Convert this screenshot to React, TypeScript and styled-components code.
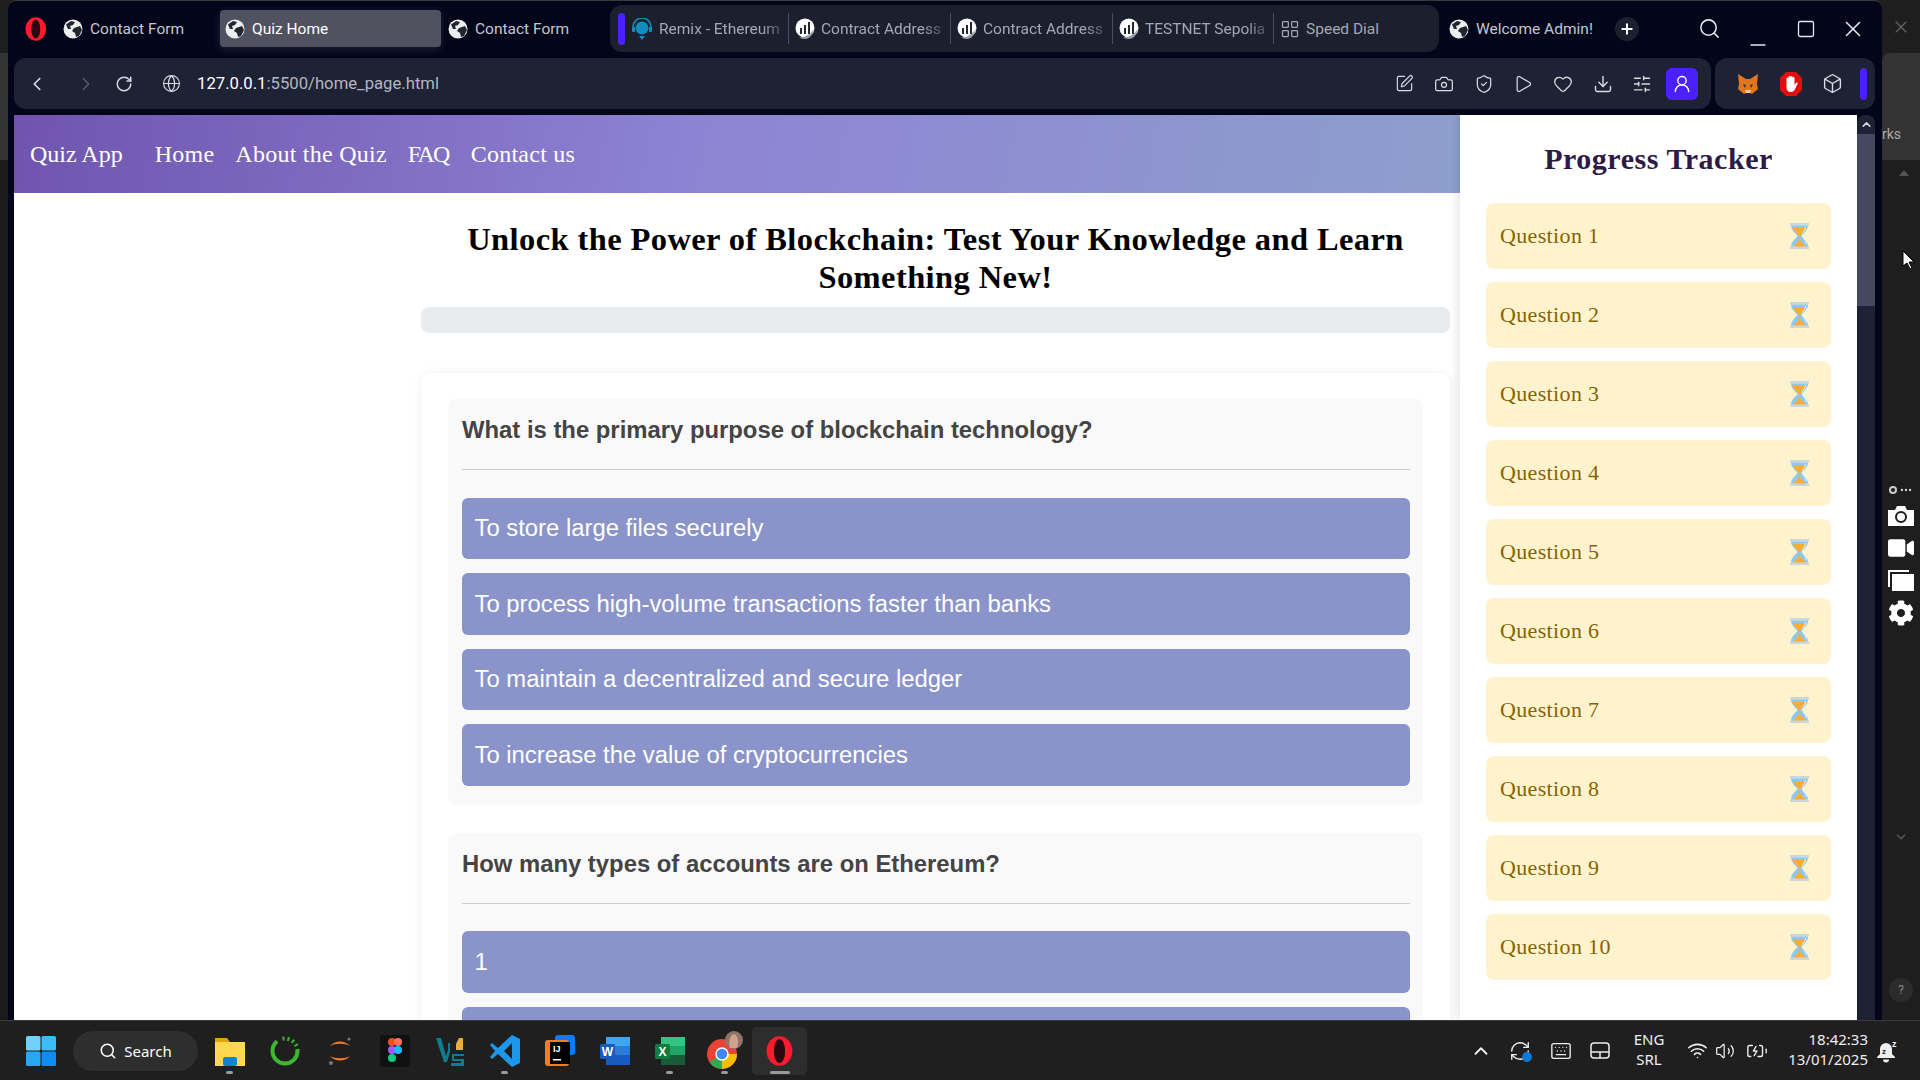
import React from 'react';
import styled, { createGlobalStyle } from 'styled-components';
import {
  ChevronLeft, ChevronRight, RotateCw, Globe, SquarePen, Camera, ShieldCheck, Play, Heart, Download,
  SlidersHorizontal, UserRound, Box, Search, Minus, Square, X, Plus, LayoutGrid, ChevronUp,
  Keyboard, Wifi, Volume2, BatteryCharging, RefreshCw, ChevronDown, MoreHorizontal,
} from 'lucide-react';
import { FaVideo, FaCog } from 'react-icons/fa';

const GlobalStyle = createGlobalStyle`
  html, body { margin: 0; padding: 0; height: 100%; overflow: hidden; background: #1f1f1f; }
  * { box-sizing: border-box; }
`;

const Screen = styled.div`
  width: 1920px;
  height: 1080px;
  display: flex;
  flex-direction: column;
  font-family: Roboto, "Liberation Sans", sans-serif;
`;
const Desktop = styled.div`
  flex: 1;
  min-height: 0;
  display: flex;
  background: #1e1e1e;
`;
const LeftEdge = styled.div`
  width: 8px;
  background: linear-gradient(#1e1e1e 53px, #333 53px, #333 160px, #1b1b1b 160px);
`;
const BrowserWindow = styled.div`
  width: 1874px;
  display: flex;
  flex-direction: column;
  background: #03061a;
  border-top: 1px solid #3a3a3a;
  border-radius: 8px 8px 0 0;
  overflow: hidden;
`;
const TabRow = styled.div`
  height: 57px;
  display: flex;
  align-items: center;
  padding: 0 0 2px 13px;
`;
const LogoSlot = styled.div`
  width: 30px;
  display: flex;
  justify-content: center;
`;
const Tab = styled.div<{ $w: number; $active?: boolean; $ml?: number }>`
  width: ${(p) => p.$w}px;
  height: 37px;
  margin-left: ${(p) => p.$ml || 0}px;
  display: flex;
  align-items: center;
  gap: 7px;
  padding-left: ${(p) => (p.$active ? '5px' : '7px')};
  border-radius: 4px;
  font-size: 15.5px;
  white-space: nowrap;
  color: ${(p) => (p.$active ? '#fff' : '#c3c6ce')};
  background: ${(p) => (p.$active ? '#50525f' : 'transparent')};
  box-shadow: ${(p) => (p.$active ? '0 2px 8px rgba(120,125,150,.25)' : 'none')};
`;
const Island = styled.div`
  width: 829px;
  height: 47px;
  margin-left: 34px;
  padding-left: 8px;
  display: flex;
  align-items: center;
  background: #1c1f2e;
  border-radius: 12px;
`;
const PurpleBar = styled.div<{ $ml?: number }>`
  width: 7px;
  height: 32px;
  flex: none;
  margin-left: ${(p) => p.$ml || 0}px;
  background: #4c1fff;
  border-radius: 4px;
`;
const IslandTab = styled.div<{ $w: number; $divider?: boolean }>`
  width: ${(p) => p.$w}px;
  height: 31px;
  flex: none;
  display: flex;
  align-items: center;
  gap: 6px;
  padding-left: 6px;
  white-space: nowrap;
  font-size: 15.5px;
  color: #a5a8b4;
  border-left: ${(p) => (p.$divider ? '1px solid #4a4d5c' : 'none')};
`;
const FadedLabel = styled.span`
  -webkit-mask-image: linear-gradient(90deg, #000 85%, rgba(0, 0, 0, 0.35));
  mask-image: linear-gradient(90deg, #000 85%, rgba(0, 0, 0, 0.35));
`;
const PlusButton = styled.div`
  width: 24px;
  height: 24px;
  display: flex;
  align-items: center;
  justify-content: center;
  border-radius: 50%;
  background: #1c1f2e;
  color: #fff;
`;
const WindowButton = styled.div<{ $ml: number; $low?: boolean }>`
  width: 26px;
  display: flex;
  justify-content: center;
  margin-left: ${(p) => p.$ml}px;
  padding-top: ${(p) => (p.$low ? '16px' : '0')};
  margin-bottom: ${(p) => (p.$low ? '-16px' : '0')};
  color: #e6e7ea;
`;
const ToolRow = styled.div`
  height: 51px;
  display: flex;
  gap: 4px;
  padding: 0 6px;
`;
const AddressBar = styled.div`
  width: 1697px;
  display: flex;
  align-items: center;
  background: #1e2235;
  border-radius: 12px;
`;
const NavIcon = styled.div<{ $w: number; $dim?: boolean }>`
  width: ${(p) => p.$w}px;
  flex: none;
  display: flex;
  justify-content: center;
  color: ${(p) => (p.$dim ? '#565a6c' : '#d9dbe1')};
`;
const UrlText = styled.div`
  flex: 1;
  margin-left: -9px;
  font-size: 16.7px;
  color: #fff;
  span { color: #b4b6c0; }
`;
const ProfileButton = styled.div`
  width: 32px;
  height: 32px;
  margin: 0 13px 0 4px;
  border-radius: 6px;
  display: flex;
  align-items: center;
  justify-content: center;
  color: #fff;
  background: #4c1fff;
`;
const ExtensionPanel = styled.div`
  width: 160px;
  display: flex;
  align-items: center;
  padding-left: 21px;
  gap: 19px;
  background: #1e2235;
  border-radius: 12px;
`;
const PageRow = styled.div`
  flex: 1;
  min-height: 0;
  margin-top: 6px;
  display: flex;
  padding: 0 6px;
`;
const MainArea = styled.div`
  width: 1446px;
  background: #fff;
  overflow: hidden;
`;
const TopNav = styled.nav`
  height: 78px;
  display: flex;
  align-items: center;
  padding-left: 16px;
  background: linear-gradient(100deg, #6f54ae 0%, #8e84d4 48%, #8d9fcc 100%);
  font-family: "Liberation Serif", serif;
  font-size: 24px;
  color: #fff;
`;
const Brand = styled.div`
  margin-right: 32px;
`;
const NavLink = styled.div<{ $tight?: boolean }>`
  margin-right: ${(p) => (p.$tight ? '22px' : '21px')};
  letter-spacing: ${(p) => (p.$tight ? '-1.8px' : '0.25px')};
`;
const Content = styled.main`
  padding: 27px 10px 0 407px;
`;
const PageTitle = styled.h1`
  margin: 0 0 11px;
  text-align: center;
  font: bold 32.5px/38px "Liberation Serif", serif;
  letter-spacing: 0.4px;
  color: #000;
`;
const ProgressTrack = styled.div`
  height: 26px;
  margin-bottom: 40px;
  background: #e9ecef;
  border-radius: 8px;
`;
const QuizCard = styled.section`
  padding: 26px 27px;
  background: #fff;
  border-radius: 10px;
  box-shadow: 0 0 10px rgba(0, 0, 0, 0.07);
`;
const QuestionBlock = styled.div`
  padding: 15px 13px 19px 14px;
  margin-bottom: 28px;
  background: #f9f9f9;
  border-radius: 8px;
`;
const QuestionTitle = styled.h3`
  margin: 0 0 27.5px;
  padding-bottom: 23px;
  height: 32px;
  box-sizing: content-box;
  border-bottom: 1px solid #ccc;
  font: bold 23.85px/32px "Liberation Sans", Arial, sans-serif;
  color: #444;
`;
const OptionList = styled.div`
  display: flex;
  flex-direction: column;
  gap: 14px;
`;
const OptionRow = styled.div`
  height: 61.5px;
  display: flex;
  align-items: center;
  padding-left: 12.5px;
  background: #8a94ca;
  border-radius: 6px;
  font: 23.85px "Liberation Sans", Arial, sans-serif;
  color: #fff;
`;
const Sidebar = styled.aside`
  width: 397px;
  padding: 0 26px;
  background: #fff;
  overflow: hidden;
  box-shadow: -3px 0 8px rgba(0, 0, 0, 0.1);
  position: relative;
`;
const SidebarTitle = styled.h2`
  margin: 26px 0 26px;
  text-align: center;
  font: bold 30px/36px "Liberation Serif", serif;
  letter-spacing: 0.53px;
  color: #2e1a47;
`;
const TrackerList = styled.div`
  display: flex;
  flex-direction: column;
  gap: 13px;
`;
const TrackerItem = styled.div`
  height: 66px;
  display: flex;
  align-items: center;
  justify-content: space-between;
  padding: 0 22px 0 14px;
  background: #fff3cd;
  border-radius: 8px;
  font: 22px "Liberation Serif", serif;
  letter-spacing: 0.35px;
  color: #856404;
`;
const ScrollTrack = styled.div`
  width: 18px;
  display: flex;
  flex-direction: column;
  align-items: center;
  background: #1e2235;
  border-radius: 8px 8px 0 0;
  color: #d5d7de;
`;
const ScrollArrow = styled.div`
  height: 19px;
  display: flex;
  align-items: center;
`;
const ScrollThumb = styled.div`
  width: 100%;
  height: 172px;
  background: #454860;
`;
const RightEdge = styled.div`
  flex: 1;
  position: relative;
  display: flex;
  flex-direction: column;
  align-items: center;
  color: #fff;
  background: #1e1e1e;
`;
const EdgeClose = styled.div`
  height: 53px;
  display: flex;
  align-items: center;
  color: #666;
`;
const EdgeTabs = styled.div`
  width: 100%;
  height: 107px;
  padding-top: 73px;
  font-size: 14px;
  color: #aaa;
  background: #333;
  border-radius: 8px 0 0 0;
`;
const EdgeTriangle = styled.div`
  margin: 10px 0 0 6px;
  width: 0;
  height: 0;
  border-left: 5px solid transparent;
  border-right: 5px solid transparent;
  border-bottom: 6px solid #555;
`;
const EdgeTools = styled.div`
  margin-top: 307px;
  display: flex;
  flex-direction: column;
  align-items: center;
  gap: 9px;
`;
const EdgeLinkRow = styled.div`
  display: flex;
  align-items: center;
  gap: 2px;
  height: 14px;
  color: #ddd;
`;
const EdgeLinkDot = styled.span`
  width: 8px;
  height: 8px;
  border: 2px solid #ccc;
  border-radius: 50%;
`;
const EdgeDownArrow = styled.div`
  margin-top: 203px;
  color: #555;
`;
const EdgeHelp = styled.div`
  margin-top: 130px;
  width: 24px;
  height: 24px;
  border-radius: 50%;
  background: #2c2c2c;
  color: #888;
  font-size: 12px;
  display: flex;
  align-items: center;
  justify-content: center;
`;
const Cursor = styled.svg`
  position: absolute;
  left: 20px;
  top: 250px;
`;
const Taskbar = styled.footer`
  height: 60px;
  display: flex;
  align-items: center;
  background: #1f1f1f;
  border-top: 1px solid #3c3c3c;
  color: #fff;
`;
const StartSlot = styled.div`
  width: 73px;
  padding-left: 26px;
  display: flex;
`;
const SearchPill = styled.div`
  width: 125px;
  height: 40px;
  margin-right: 4px;
  display: flex;
  align-items: center;
  justify-content: center;
  gap: 7px;
  background: #2e2e2e;
  border-radius: 20px;
  font: 15px "Noto Sans", sans-serif;
`;
const AppSlot = styled.div<{ $active?: boolean; $dot?: number }>`
  width: 55px;
  height: 48px;
  flex: none;
  position: relative;
  display: flex;
  align-items: center;
  justify-content: center;
  border-radius: 5px;
  background: ${(p) => (p.$active ? '#2d2d2d' : 'transparent')};
  &::after {
    content: '';
    display: ${(p) => (p.$dot ? 'block' : 'none')};
    position: absolute;
    bottom: 1px;
    left: 50%;
    width: ${(p) => p.$dot}px;
    height: 3px;
    margin-left: ${(p) => -(p.$dot || 0) / 2}px;
    border-radius: 2px;
    background: #9a9a9a;
  }
`;
const Tray = styled.div`
  margin-left: auto;
  padding-right: 12px;
  display: flex;
  align-items: center;
  color: #eee;
`;
const TrayIcon = styled.div<{ $w: number }>`
  width: ${(p) => p.$w}px;
  display: flex;
  justify-content: center;
  position: relative;
`;
const BlueDot = styled.span`
  position: absolute;
  right: 9px;
  bottom: 0;
  width: 10px;
  height: 10px;
  border-radius: 50%;
  background: #0b78d8;
`;
const TrayText = styled.div<{ $w: number; $align: string }>`
  width: ${(p) => p.$w}px;
  padding-bottom: 3px;
  text-align: ${(p) => p.$align};
  font: 15px/20.5px "Noto Sans", sans-serif;
`;

const Favicon = () => (
  <svg width="20" height="20" viewBox="0 0 20 20">
    <circle cx="10" cy="10" r="9.5" fill="#eceef0" />
    <path d="M3 5.5 8 2l4 1-2 3-3 1 1 3-3 0zM11 9l6-2 2 4-3 6-3 1-1-4-3-2z" fill="#23262f" />
  </svg>
);
const OperaLogo = ({ size = 24 }: { size?: number }) => (
  <svg width={size * 0.9} height={size} viewBox="0 0 22 24">
    <ellipse cx="11" cy="12" rx="10.5" ry="12" fill="#ff1b2d" />
    <ellipse cx="11" cy="12" rx="4.6" ry="9.8" fill="#2a0a10" />
  </svg>
);
const ScanIcon = () => (
  <svg width="20" height="22" viewBox="0 0 20 22">
    <circle cx="10" cy="10" r="9.5" fill="#fff" />
    <path d="M5 10h2v6H5zM9 7h2v9H9zM13 4h2v12h-2z" fill="#23262f" />
    <path d="M4 19c5 1 11-2 15-8-1 6-5 10-9 10-3 0-5-1-6-2z" fill="#9a9ca3" />
  </svg>
);
const RemixIcon = () => (
  <svg width="22" height="22" viewBox="0 0 22 22">
    <circle cx="11" cy="10" r="6.5" fill="#0d8fc0" />
    <path d="M2 11V9a9 9 0 0 1 18 0v2" fill="none" stroke="#0d8fc0" strokeWidth="1.6" />
    <rect x="1" y="9" width="3" height="5" rx="1" fill="#0d8fc0" />
    <rect x="18" y="9" width="3" height="5" rx="1" fill="#0d8fc0" />
    <path d="M8 18h6l-3 4z" fill="#0d8fc0" />
  </svg>
);
const FoxIcon = () => (
  <svg width="24" height="24" viewBox="0 0 24 24">
    <path d="M2 2l8 5h4l8-5-1 10 1 5-6 5-2-1h-4l-2 1-6-5 1-5z" fill="#e2761b" />
    <path d="M7 12l3 1-1 3zM17 12l-3 1 1 3z" fill="#233447" />
    <path d="M9 18h6l-1 3h-4z" fill="#f6c9a0" />
  </svg>
);
const StopIcon = () => (
  <svg width="24" height="26" viewBox="0 0 24 26">
    <path d="M7 1h10l6 6v12l-6 6H7l-6-6V7z" fill="#e30e0e" />
    <path d="M7.5 12V7.5a1 1 0 0 1 2 0V6a1 1 0 0 1 2 0v0a1 1 0 0 1 2 0v1a1 1 0 0 1 2 0v7l1.5-2c1-1 2 0 1.5 1l-3 6c-1 1.5-2 2-3.5 2-3 0-4.5-2-4.5-4z" fill="#fff" />
  </svg>
);
const Hourglass = () => (
  <svg width="19" height="26" viewBox="0 0 19 26">
    <rect x="0" y="0" width="19" height="2.5" fill="#ccd6dd" />
    <rect x="0" y="23.5" width="19" height="2.5" fill="#ccd6dd" />
    <path d="M1 2.5h17c0 5-5 8-6.5 10.500 1.5 2.5 6.5 5.5 6.5 10.500H1c0-5 5-8 6.5-10.500C6 10.500 1 7.5 1 2.500z" fill="#88c9f9" />
    <path d="M2.5 5h14c-1 3-5 5.5-6 8h-2c-1-2.5-5-5-6-8zM9 13h1l.5 5 5.5 5.500H3L8.500 18z" fill="#ffac33" />
    <path d="M15.5 4c0 3-2 5-3.500 6.500M13 15c1.500 1.500 3 3.500 3 6" stroke="#e6f4ff" strokeWidth="1" fill="none" />
  </svg>
);
const SolidCamera = () => (
  <svg width="26" height="20" viewBox="0 0 26 20">
    <path d="M0 4h7l2-4h8l2 4h7v16H0z" fill="#fff" />
    <circle cx="13" cy="11" r="5" fill="#fff" stroke="#1e1e1e" strokeWidth="2" />
  </svg>
);
const StackedWindows = () => (
  <svg width="26" height="21" viewBox="0 0 26 21">
    <path d="M0 0h21v2H2v15H0z" fill="#fff" />
    <rect x="4" y="4" width="22" height="17" fill="#fff" />
  </svg>
);
const WindowsLogo = () => (
  <svg width="30" height="30" viewBox="0 0 30 30">
    <rect x="0" y="0" width="14.5" height="14.5" rx="1.5" fill="#6fd2fb" />
    <rect x="15.5" y="0" width="14.5" height="14.5" rx="1.5" fill="#3cbcf8" />
    <rect x="0" y="15.5" width="14.5" height="14.5" rx="1.5" fill="#26a8f5" />
    <rect x="15.5" y="15.5" width="14.5" height="14.5" rx="1.5" fill="#0f8cf0" />
  </svg>
);
const ExplorerIcon = () => (
  <svg width="30" height="30" viewBox="0 0 30 30">
    <path d="M0 2h12l3 4h15v24H0z" fill="#e0a50e" />
    <rect y="6" width="30" height="24" fill="#ffd84f" />
    <rect x="8" y="21" width="14" height="9" rx="2" fill="#1482cf" />
  </svg>
);
const RingIcon = () => (
  <svg width="30" height="30" viewBox="0 0 30 30">
    <circle cx="15" cy="15" r="12.5" fill="none" stroke="#3eb82f" strokeWidth="4" strokeDasharray="50 6 2 3 2 3 2 3 2 3" />
  </svg>
);
const JupyterIcon = () => (
  <svg width="26" height="30" viewBox="0 0 26 30">
    <path d="M3 10c5-6 15-6 20 0-5-3-15-3-20 0zM3 20c5 6 15 6 20 0-5 3-15 3-20 0z" fill="#f37726" />
    <circle cx="4" cy="27" r="2" fill="#777" />
    <circle cx="22" cy="3" r="1.5" fill="#777" />
  </svg>
);
const FigmaIcon = () => (
  <svg width="30" height="32" viewBox="0 0 30 32">
    <rect width="30" height="32" rx="3" fill="#111" />
    <circle cx="12" cy="7" r="4" fill="#f24e1e" />
    <circle cx="18" cy="7" r="4" fill="#ff7262" />
    <circle cx="12" cy="15" r="4" fill="#a259ff" />
    <circle cx="18" cy="15" r="4" fill="#1abcfe" />
    <circle cx="12" cy="23" r="4" fill="#0acf83" />
  </svg>
);
const VsIcon = () => (
  <svg width="30" height="30" viewBox="0 0 30 30">
    <path d="M1 2h5l5 18 2-6v-7h2v9l-3 10H9z" fill="#0f7c8e" />
    <path d="M21 8l3-6h4v12h-7z" fill="#f0a93a" />
    <path d="M17 18h12v2H19v3h10v7H16v-3h10v-2H17z" fill="#0f7c8e" />
  </svg>
);
const VsCodeIcon = () => (
  <svg width="30" height="32" viewBox="0 0 30 32">
    <path d="M22 0l8 4v24l-8 4L8 19l-6 5-2-2 5-6-5-6 2-2 6 5z" fill="#1c97ea" />
    <path d="M22 8l-8 8 8 8z" fill="#1f1f1f" />
  </svg>
);
const IntellijIcon = () => (
  <svg width="30" height="32" viewBox="0 0 30 32">
    <rect x="10" y="0" width="20" height="20" rx="3" fill="#087cfa" />
    <rect x="0" y="5" width="24" height="26" rx="3" fill="#fe7a17" />
    <rect x="5" y="7" width="20" height="22" fill="#000" />
    <text x="8" y="17" fontSize="9" fontWeight="700" fill="#fff" fontFamily="Liberation Sans">IJ</text>
    <rect x="8" y="24" width="8" height="1.5" fill="#fff" />
  </svg>
);
const OfficeIcon = ({ letter, dark, mid, light, tile }: { letter: string; dark: string; mid: string; light: string; tile: string }) => (
  <svg width="30" height="28" viewBox="0 0 30 28">
    <rect x="6" y="0" width="24" height="9.5" fill={light} />
    <rect x="6" y="9" width="24" height="9.5" fill={mid} />
    <rect x="6" y="18" width="24" height="10" fill={dark} />
    <rect x="0" y="7" width="15" height="15" rx="1.5" fill={tile} />
    <text x="7.5" y="19" textAnchor="middle" fontSize="12" fontWeight="700" fill="#fff" fontFamily="Liberation Sans">{letter}</text>
  </svg>
);
const ChromeIcon = () => (
  <svg width="36" height="40" viewBox="0 0 36 40">
    <circle cx="15" cy="23" r="15" fill="#ea4335" />
    <path d="M15 23 2.5 31A15 15 0 0 0 15 38z" fill="#34a853" />
    <path d="M15 23h15a15 15 0 0 1-15 15z" fill="#fbbc05" />
    <circle cx="15" cy="23" r="6" fill="#4285f4" stroke="#fff" strokeWidth="1.5" />
    <circle cx="27" cy="9" r="9" fill="#8d7468" />
    <path d="M23 17c-2-6 0-13 4-14 4 1 5 8 3 14z" fill="#cfa48d" />
  </svg>
);
const SnoozeBell = () => (
  <svg width="22" height="24" viewBox="0 0 22 24">
    <path d="M9 4a6 6 0 0 0-6 6v5l-3 3v1h18v-1l-3-3v-5a6 6 0 0 0-6-6z" fill="#eee" />
    <path d="M6 20.5a3 3 0 0 0 6 0z" fill="#eee" />
    <text x="5" y="15" fontSize="8" fontWeight="700" fill="#222" fontFamily="Liberation Sans">z</text>
    <text x="15" y="8" fontSize="9" fontWeight="700" fill="#eee" fontFamily="Liberation Sans">z</text>
  </svg>
);
const TouchpadIcon = () => (
  <svg width="20" height="18" viewBox="0 0 20 18">
    <rect x="1" y="1" width="18" height="15" rx="3" fill="none" stroke="#eee" strokeWidth="1.5" />
    <path d="M1 10h18M10 10v6" stroke="#eee" strokeWidth="1.5" />
  </svg>
);

const questions = Array.from({ length: 10 }, (_, i) => `Question ${i + 1}`);
const firstOptions = [
  'To store large files securely',
  'To process high-volume transactions faster than banks',
  'To maintain a decentralized and secure ledger',
  'To increase the value of cryptocurrencies',
];

export default function App() {
  return (
    <Screen>
      <GlobalStyle />
      <Desktop>
        <LeftEdge />
        <BrowserWindow>
          <TabRow>
            <LogoSlot><OperaLogo size={24} /></LogoSlot>
            <Tab $w={161} $ml={5}><Favicon />Contact Form</Tab>
            <Tab $w={221} $ml={3} $active><Favicon />Quiz Home</Tab>
            <Tab $w={135}><Favicon />Contact Form</Tab>
            <Island>
              <PurpleBar />
              <IslandTab $w={163}><RemixIcon /><FadedLabel>Remix - Ethereum</FadedLabel></IslandTab>
              <IslandTab $w={162} $divider><ScanIcon /><FadedLabel>Contract Address</FadedLabel></IslandTab>
              <IslandTab $w={162} $divider><ScanIcon /><FadedLabel>Contract Address</FadedLabel></IslandTab>
              <IslandTab $w={161} $divider><ScanIcon /><FadedLabel>TESTNET Sepolia</FadedLabel></IslandTab>
              <IslandTab $w={150} $divider><LayoutGrid size={20} strokeWidth={1.5} />Speed Dial</IslandTab>
            </Island>
            <Tab $w={173} $ml={3}><Favicon />Welcome Admin!</Tab>
            <PlusButton><Plus size={16} strokeWidth={3} /></PlusButton>
            <WindowButton $ml={57}><Search size={23} strokeWidth={1.6} /></WindowButton>
            <WindowButton $ml={23} $low><Minus size={24} strokeWidth={1.4} /></WindowButton>
            <WindowButton $ml={22}><Square size={20} strokeWidth={1.6} /></WindowButton>
            <WindowButton $ml={21}><X size={26} strokeWidth={1.5} /></WindowButton>
          </TabRow>
          <ToolRow>
            <AddressBar>
              <NavIcon $w={46}><ChevronLeft size={22} strokeWidth={1.8} /></NavIcon>
              <NavIcon $w={52} $dim><ChevronRight size={22} strokeWidth={1.8} /></NavIcon>
              <NavIcon $w={24}><RotateCw size={18} strokeWidth={2} /></NavIcon>
              <NavIcon $w={70}><Globe size={19} strokeWidth={1.4} /></NavIcon>
              <UrlText>127.0.0.1<span>:5500/home_page.html</span></UrlText>
              <NavIcon $w={40}><SquarePen size={19} strokeWidth={1.5} /></NavIcon>
              <NavIcon $w={40}><Camera size={20} strokeWidth={1.5} /></NavIcon>
              <NavIcon $w={39}><ShieldCheck size={20} strokeWidth={1.5} /></NavIcon>
              <NavIcon $w={40}><Play size={20} strokeWidth={1.5} /></NavIcon>
              <NavIcon $w={40}><Heart size={20} strokeWidth={1.5} /></NavIcon>
              <NavIcon $w={39}><Download size={20} strokeWidth={1.7} /></NavIcon>
              <NavIcon $w={40}><SlidersHorizontal size={20} strokeWidth={1.7} /></NavIcon>
              <ProfileButton><UserRound size={20} strokeWidth={1.7} /></ProfileButton>
            </AddressBar>
            <ExtensionPanel>
              <FoxIcon />
              <StopIcon />
              <Box size={21} color="#d9dbe1" strokeWidth={1.6} />
              <PurpleBar $ml={-2} />
            </ExtensionPanel>
          </ToolRow>
          <PageRow>
            <MainArea>
              <TopNav>
                <Brand>Quiz App</Brand>
                <NavLink>Home</NavLink>
                <NavLink>About the Quiz</NavLink>
                <NavLink $tight>FAQ</NavLink>
                <NavLink>Contact us</NavLink>
              </TopNav>
              <Content>
                <PageTitle>Unlock the Power of Blockchain: Test Your Knowledge and Learn<br />Something New!</PageTitle>
                <ProgressTrack />
                <QuizCard>
                  <QuestionBlock>
                    <QuestionTitle>What is the primary purpose of blockchain technology?</QuestionTitle>
                    <OptionList>
                      {firstOptions.map((o) => <OptionRow key={o}>{o}</OptionRow>)}
                    </OptionList>
                  </QuestionBlock>
                  <QuestionBlock>
                    <QuestionTitle>How many types of accounts are on Ethereum?</QuestionTitle>
                    <OptionList>
                      <OptionRow>1</OptionRow>
                      <OptionRow />
                    </OptionList>
                  </QuestionBlock>
                </QuizCard>
              </Content>
            </MainArea>
            <Sidebar>
              <SidebarTitle>Progress Tracker</SidebarTitle>
              <TrackerList>
                {questions.map((q) => (
                  <TrackerItem key={q}>{q}<Hourglass /></TrackerItem>
                ))}
              </TrackerList>
            </Sidebar>
            <ScrollTrack>
              <ScrollArrow><ChevronUp size={13} strokeWidth={3} /></ScrollArrow>
              <ScrollThumb />
            </ScrollTrack>
          </PageRow>
        </BrowserWindow>
        <RightEdge>
          <EdgeClose><X size={20} strokeWidth={1.4} /></EdgeClose>
          <EdgeTabs>rks</EdgeTabs>
          <EdgeTriangle />
          <EdgeTools>
            <EdgeLinkRow><EdgeLinkDot /><MoreHorizontal size={14} /></EdgeLinkRow>
            <SolidCamera />
            <FaVideo size={26} />
            <StackedWindows />
            <FaCog size={26} />
          </EdgeTools>
          <EdgeDownArrow><ChevronDown size={14} strokeWidth={3} /></EdgeDownArrow>
          <EdgeHelp>?</EdgeHelp>
          <Cursor width="14" height="20" viewBox="0 0 14 20">
            <path d="M1 1v15l4-3 3 6 2-1-3-6h5z" fill="#fff" stroke="#000" strokeWidth="1" />
          </Cursor>
        </RightEdge>
      </Desktop>
      <Taskbar>
        <StartSlot><WindowsLogo /></StartSlot>
        <SearchPill><Search size={18} strokeWidth={2} />Search</SearchPill>
        <AppSlot $dot={7}><ExplorerIcon /></AppSlot>
        <AppSlot><RingIcon /></AppSlot>
        <AppSlot><JupyterIcon /></AppSlot>
        <AppSlot><FigmaIcon /></AppSlot>
        <AppSlot><VsIcon /></AppSlot>
        <AppSlot $dot={7}><VsCodeIcon /></AppSlot>
        <AppSlot><IntellijIcon /></AppSlot>
        <AppSlot><OfficeIcon letter="W" dark="#185abd" mid="#2b7cd3" light="#41a5ee" tile="#185abd" /></AppSlot>
        <AppSlot $dot={7}><OfficeIcon letter="X" dark="#185c37" mid="#21a366" light="#33c481" tile="#107c41" /></AppSlot>
        <AppSlot $dot={7}><ChromeIcon /></AppSlot>
        <AppSlot $active $dot={20}><OperaLogo size={30} /></AppSlot>
        <Tray>
          <TrayIcon $w={36}><ChevronUp size={22} strokeWidth={2} /></TrayIcon>
          <TrayIcon $w={42}><RefreshCw size={22} strokeWidth={1.5} /><BlueDot /></TrayIcon>
          <TrayIcon $w={40}><Keyboard size={22} strokeWidth={1.5} /></TrayIcon>
          <TrayIcon $w={38}><TouchpadIcon /></TrayIcon>
          <TrayText $w={60} $align="center">ENG<br />SRL</TrayText>
          <TrayIcon $w={36}><Wifi size={21} strokeWidth={1.8} /></TrayIcon>
          <TrayIcon $w={20}><Volume2 size={20} strokeWidth={1.5} /></TrayIcon>
          <TrayIcon $w={44}><BatteryCharging size={22} strokeWidth={1.5} /></TrayIcon>
          <TrayText $w={89} $align="right">18:42:33<br />13/01/2025</TrayText>
          <TrayIcon $w={40}><SnoozeBell /></TrayIcon>
        </Tray>
      </Taskbar>
    </Screen>
  );
}
